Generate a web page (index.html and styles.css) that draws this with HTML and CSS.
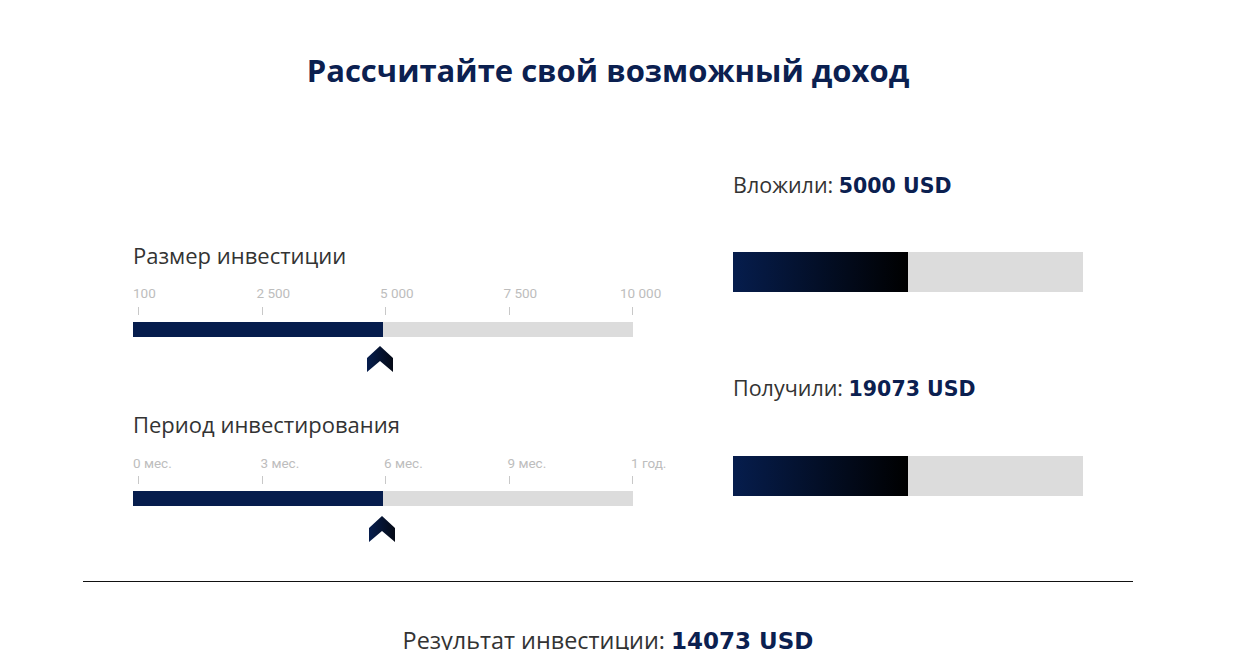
FILE: index.html
```html
<!DOCTYPE html>
<html lang="ru">
<head>
<meta charset="utf-8">
<title>Калькулятор дохода</title>
<link rel="stylesheet" href="styles.css">
</head>
<body>
<div class="page">
  <h1 class="title">Рассчитайте свой возможный доход</h1>
  <div class="calc">
    <div class="sliders">
      <div class="slider slider-sum">
        <div class="slider-label">Размер инвестиции</div>
        <div class="scale">
          <div class="mark"><span class="mark-text">100</span><span class="tick"></span></div>
          <div class="mark"><span class="mark-text">2 500</span><span class="tick"></span></div>
          <div class="mark"><span class="mark-text">5 000</span><span class="tick"></span></div>
          <div class="mark"><span class="mark-text">7 500</span><span class="tick"></span></div>
          <div class="mark mark-last"><span class="mark-text m-end">10 000</span><span class="tick"></span></div>
        </div>
        <div class="track"><div class="track-fill" style="width:250px"></div></div>
        <div class="thumb">
          <svg width="26" height="26" viewBox="0 0 26 26">
            <defs>
              <linearGradient id="tg1" x1="0" y1="0" x2="1" y2="0">
                <stop offset="0" stop-color="#061d4d"/>
                <stop offset="1" stop-color="#050a16"/>
              </linearGradient>
            </defs>
            <polygon points="13,0 26,12 26,26 13,15 0,26 0,12" fill="url(#tg1)"/>
          </svg>
        </div>
      </div>
      <div class="slider slider-period">
        <div class="slider-label">Период инвестирования</div>
        <div class="scale">
          <div class="mark"><span class="mark-text">0 мес.</span><span class="tick"></span></div>
          <div class="mark"><span class="mark-text">3 мес.</span><span class="tick"></span></div>
          <div class="mark"><span class="mark-text">6 мес.</span><span class="tick"></span></div>
          <div class="mark"><span class="mark-text">9 мес.</span><span class="tick"></span></div>
          <div class="mark mark-last"><span class="mark-text">1 год.</span><span class="tick"></span></div>
        </div>
        <div class="track"><div class="track-fill" style="width:250px"></div></div>
        <div class="thumb">
          <svg width="26" height="26" viewBox="0 0 26 26">
            <defs>
              <linearGradient id="tg2" x1="0" y1="0" x2="1" y2="0">
                <stop offset="0" stop-color="#061d4d"/>
                <stop offset="1" stop-color="#050a16"/>
              </linearGradient>
            </defs>
            <polygon points="13,0 26,12 26,26 13,15 0,26 0,12" fill="url(#tg2)"/>
          </svg>
        </div>
      </div>
    </div>
    <div class="results">
      <div class="res-line">Вложили: <b>5000 USD</b></div>
      <div class="res-bar"><div class="res-fill" style="width:175px"></div></div>
      <div class="res-line res-line-2">Получили: <b>19073 USD</b></div>
      <div class="res-bar"><div class="res-fill" style="width:175px"></div></div>
    </div>
  </div>
  <hr class="divider">
  <div class="total">Результат инвестиции: <b>14073 USD</b></div>
</div>
</body>
</html>
```

FILE: styles.css
```css
html, body {
  margin: 0;
  padding: 0;
  background: #fff;
}
body {
  font-family: "Open Sans", "Liberation Sans", sans-serif;
  color: #333;
  overflow: hidden;
}
.page {
  width: 1050px;
  margin-left: 83px;
}
.title {
  margin: 52px 0 0;
  font-size: 31px;
  line-height: 36px;
  font-weight: 700;
  color: #0b2050;
  text-align: center;
}
.calc {
  display: grid;
  grid-template-columns: 650px 1fr;
  margin-top: 82px;
}
.sliders {
  padding-left: 50px;
  padding-top: 70px;
}
.slider {
  width: 500px;
}
.slider-period {
  margin-top: 37px;
}
.slider-label {
  font-size: 22px;
  line-height: 30px;
  color: #333;
}
.scale {
  display: flex;
  margin-top: 15px;
  font-family: Roboto, "Liberation Sans", sans-serif;
  font-size: 13.5px;
  line-height: 16px;
  color: #bdbdbd;
}
.slider-period .scale {
  margin-top: 16px;
}
.mark {
  flex: 0 0 123.5px;
  display: flex;
  flex-direction: column;
  padding-left: 5px;
  box-sizing: border-box;
}
.mark-last {
  flex: 0 0 auto;
}
.mark-text {
  margin-left: -5px;
  white-space: nowrap;
}
.m-end {
  margin-left: -12px;
}
.slider-period .mark + .mark .mark-text {
  margin-left: -1px;
}
.tick {
  width: 1px;
  height: 8px;
  margin-top: 6px;
  background: #c8c8c8;
}
.slider-period .tick {
  margin-top: 5px;
}
.track {
  height: 15px;
  margin-top: 7px;
  background: #dcdcdc;
}
.track-fill {
  height: 100%;
  background: #061d4d;
}
.thumb {
  margin-top: 9px;
  margin-left: 234px;
  height: 26px;
}
.slider-period .thumb {
  margin-top: 10px;
  margin-left: 236px;
}
.thumb svg {
  display: block;
}
.results {
  width: 350px;
}
.res-line {
  height: 30px;
  font-size: 21.5px;
  line-height: 30px;
  color: #333;
}
.res-line b, .total b {
  font-family: "DejaVu Sans", "Open Sans", sans-serif;
  font-weight: 700;
  line-height: 1;
  color: #0b2050;
}
.res-line b {
  font-size: 20.5px;
}
.res-line-2 {
  margin-top: 81px;
}
.res-bar {
  height: 40px;
  margin-top: 52px;
  background: #dcdcdc;
}
.res-line-2 + .res-bar {
  margin-top: 53px;
}
.res-fill {
  height: 100%;
  background: linear-gradient(to right, #061d4d, #000);
}
.divider {
  margin: 39px 0 0;
  border: 0;
  height: 1px;
  background: #111;
}
.total {
  margin-top: 43px;
  height: 30px;
  text-align: center;
  font-size: 23.4px;
  line-height: 30px;
  color: #333;
}
.total b {
  font-size: 23px;
}
```
